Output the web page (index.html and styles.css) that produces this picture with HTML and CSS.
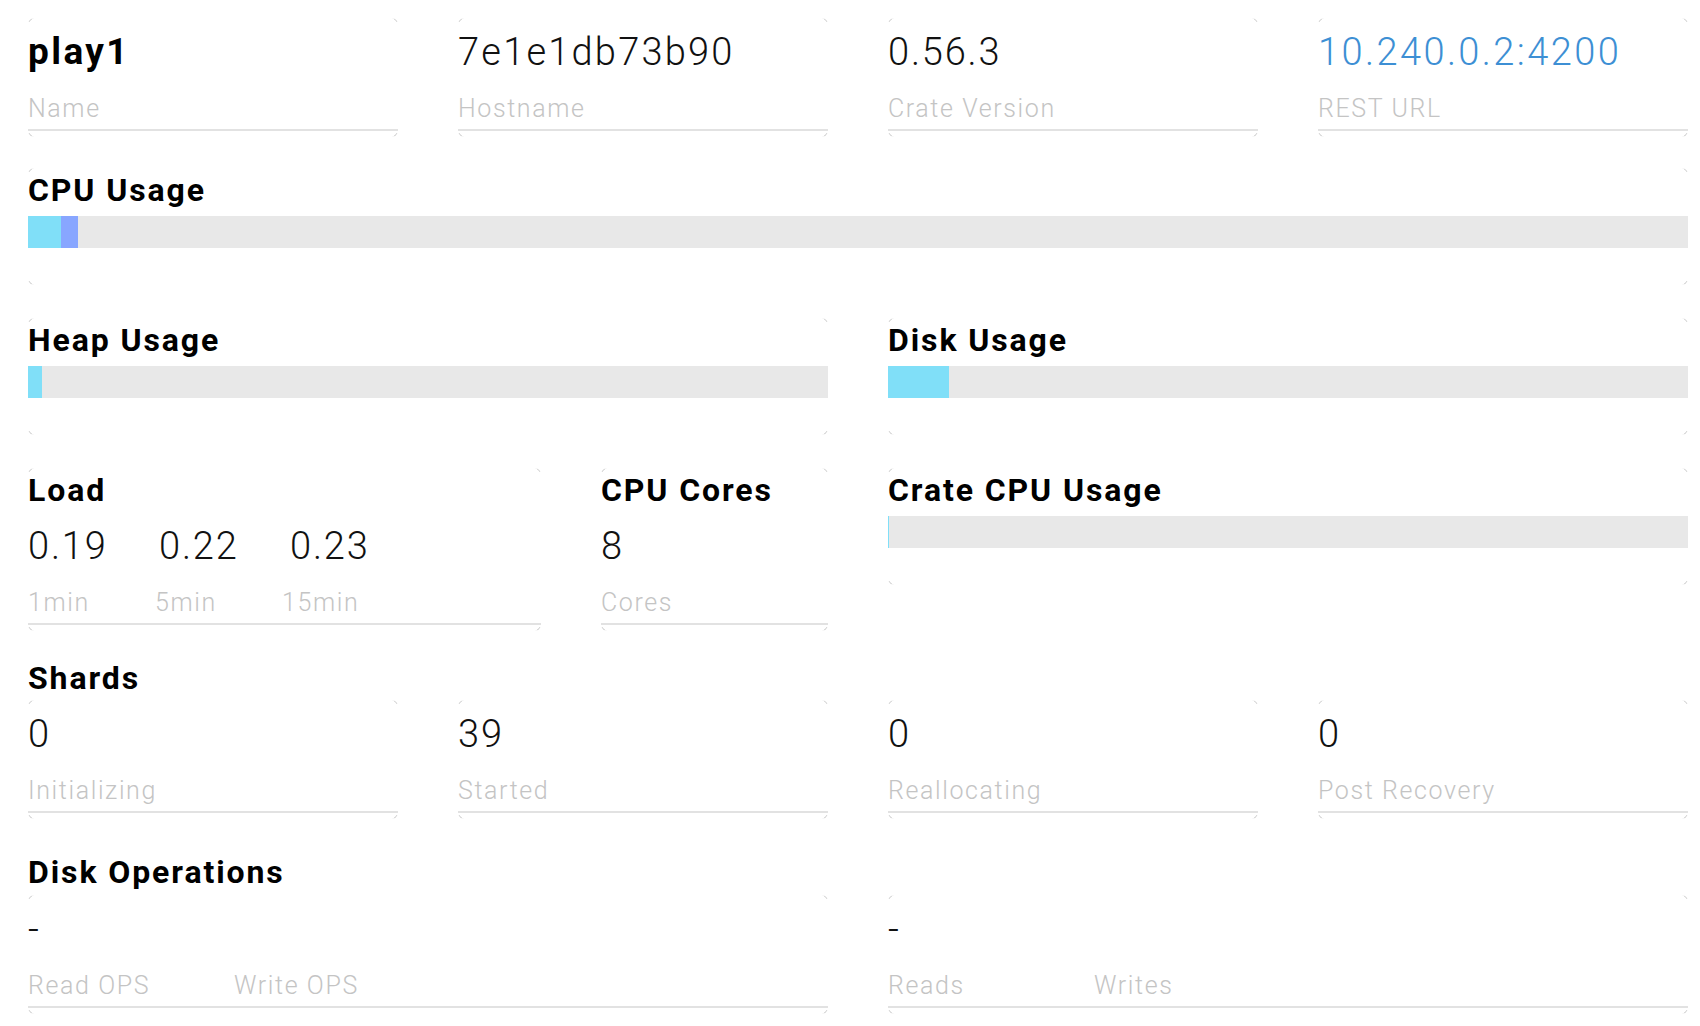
FILE: index.html
```html
<!DOCTYPE html>
<html lang="en">
<head>
<meta charset="utf-8">
<title>Node play1</title>
<link rel="stylesheet" href="styles.css">
</head>
<body>
<div class="page">
  <div class="grid g4 row-info">
    <div class="card stat">
      <div class="stat-body">
        <div class="value node-name">play1</div>
        <div class="label">Name</div>
      </div>
    </div>
    <div class="card stat">
      <div class="stat-body">
        <div class="value host">7e1e1db73b90</div>
        <div class="label">Hostname</div>
      </div>
    </div>
    <div class="card stat">
      <div class="stat-body">
        <div class="value">0.56.3</div>
        <div class="label">Crate Version</div>
      </div>
    </div>
    <div class="card stat">
      <div class="stat-body">
        <div class="value"><a class="link" href="#">10.240.0.2:4200</a></div>
        <div class="label">REST URL</div>
      </div>
    </div>
  </div>

  <div class="card meter row-cpu">
    <h2 class="title">CPU Usage</h2>
    <div class="bar"><span class="seg cyan" style="width:2%"></span><span class="seg blue" style="width:1%"></span></div>
  </div>

  <div class="grid g2 row-mem">
    <div class="card meter">
      <h2 class="title">Heap Usage</h2>
      <div class="bar"><span class="seg cyan" style="width:1.75%"></span></div>
    </div>
    <div class="card meter">
      <h2 class="title">Disk Usage</h2>
      <div class="bar"><span class="seg cyan" style="width:7.6%"></span></div>
    </div>
  </div>

  <div class="grid g2 row-load">
    <div class="grid gload">
      <div class="card stat">
        <div class="stat-body">
          <h2 class="title">Load</h2>
          <div class="values">
            <span class="value cell-load">0.19</span>
            <span class="value cell-load">0.22</span>
            <span class="value cell-load">0.23</span>
          </div>
          <div class="labels">
            <span class="label cell-load-label">1min</span>
            <span class="label cell-load-label">5min</span>
            <span class="label cell-load-label">15min</span>
          </div>
        </div>
      </div>
      <div class="card stat">
        <div class="stat-body">
          <h2 class="title">CPU Cores</h2>
          <div class="values"><span class="value">8</span></div>
          <div class="labels"><span class="label">Cores</span></div>
        </div>
      </div>
    </div>
    <div class="card meter">
      <h2 class="title">Crate CPU Usage</h2>
      <div class="bar"><span class="seg cyan thin"></span></div>
    </div>
  </div>

  <section class="section shards">
    <h2 class="title">Shards</h2>
    <div class="grid g4">
      <div class="card stat">
        <div class="stat-body">
          <div class="value">0</div>
          <div class="label">Initializing</div>
        </div>
      </div>
      <div class="card stat">
        <div class="stat-body">
          <div class="value">39</div>
          <div class="label">Started</div>
        </div>
      </div>
      <div class="card stat">
        <div class="stat-body">
          <div class="value">0</div>
          <div class="label">Reallocating</div>
        </div>
      </div>
      <div class="card stat">
        <div class="stat-body">
          <div class="value">0</div>
          <div class="label">Post Recovery</div>
        </div>
      </div>
    </div>
  </section>

  <section class="section diskops">
    <h2 class="title">Disk Operations</h2>
    <div class="grid g2">
      <div class="card stat">
        <div class="stat-body">
          <div class="value">-</div>
          <div class="labels">
            <span class="label cell-ops">Read OPS</span>
            <span class="label cell-ops">Write OPS</span>
          </div>
        </div>
      </div>
      <div class="card stat">
        <div class="stat-body">
          <div class="value">-</div>
          <div class="labels">
            <span class="label cell-ops">Reads</span>
            <span class="label cell-ops">Writes</span>
          </div>
        </div>
      </div>
    </div>
  </section>
</div>
</body>
</html>
```

FILE: styles.css
```css
* { box-sizing: border-box; }

html, body {
  margin: 0;
  padding: 0;
  background: #ffffff;
}

body {
  font-family: "Roboto", "Liberation Sans", sans-serif;
  color: #111111;
}

.page {
  width: 1700px;
  padding: 18px 12px 0 28px;
}

.grid {
  display: grid;
  column-gap: 60px;
}

.g4 { grid-template-columns: repeat(4, 1fr); }
.g2 { grid-template-columns: 1fr 1fr; }
.gload { grid-template-columns: 513px 227px; }

/* card with faint rounded corner marks */
.card {
  position: relative;
}

.card::before {
  content: "";
  position: absolute;
  inset: 0;
  border: 1px solid #c4c4c4;
  border-radius: 6px;
  pointer-events: none;
  -webkit-mask-image:
    linear-gradient(to right, #000 4px, transparent 4px, transparent calc(100% - 4px), #000 calc(100% - 4px)),
    linear-gradient(to bottom, #000 4px, transparent 4px, transparent calc(100% - 4px), #000 calc(100% - 4px));
  -webkit-mask-composite: source-in;
  mask-image:
    linear-gradient(to right, #000 4px, transparent 4px, transparent calc(100% - 4px), #000 calc(100% - 4px)),
    linear-gradient(to bottom, #000 4px, transparent 4px, transparent calc(100% - 4px), #000 calc(100% - 4px));
  mask-composite: intersect;
}

/* stat cards: value + label + underline */
.stat {
  padding: 12px 0 6px;
}

.stat-body {
  border-bottom: 2px solid #e2e2e2;
  padding-bottom: 5px;
}

.value {
  display: block;
  font-size: 38px;
  line-height: 44px;
  font-weight: 300;
  letter-spacing: 1.8px;
  color: #111111;
  white-space: nowrap;
}

.value.host {
  letter-spacing: 2.2px;
  font-variant-numeric: tabular-nums;
}

.value.node-name {
  font-size: 37px;
  font-weight: 700;
  letter-spacing: 2.4px;
  color: #000000;
}

.link {
  color: #3d8fd4;
  letter-spacing: 2.4px;
  text-decoration: none;
}

.label {
  display: block;
  margin-top: 20px;
  font-size: 25px;
  line-height: 30px;
  font-weight: 300;
  letter-spacing: 1.6px;
  color: #c4c4c4;
  white-space: nowrap;
}

.values {
  display: flex;
  margin-top: 15px;
}

.labels {
  display: flex;
  margin-top: 20px;
}

.labels .label {
  margin-top: 0;
}

.cell-load { width: 131px; }
.cell-load-label { width: 127px; }
.cell-ops { width: 206px; }

/* headings */
.title {
  margin: 0;
  font-size: 32px;
  line-height: 38px;
  font-weight: 700;
  letter-spacing: 1.9px;
  color: #000000;
  white-space: nowrap;
}

.row-load .stat {
  padding-top: 3px;
}

/* meter cards */
.meter {
  padding: 3px 0 37px;
}

.bar {
  display: flex;
  height: 32px;
  margin-top: 7px;
  background: #e8e8e8;
}

.seg { display: block; height: 100%; }
.seg.cyan { background: #80dff8; }
.seg.blue { background: #88a6ff; }
.seg.thin { width: 1px; }

/* vertical rhythm between rows */
.row-cpu { margin-top: 31px; }
.row-mem { margin-top: 33px; }
.row-load { margin-top: 33px; align-items: start; }

.section .title { margin-bottom: 3px; }
.shards { margin-top: 28px; }
.diskops { margin-top: 34px; }
.diskops .title { margin-bottom: 4px; }
```
